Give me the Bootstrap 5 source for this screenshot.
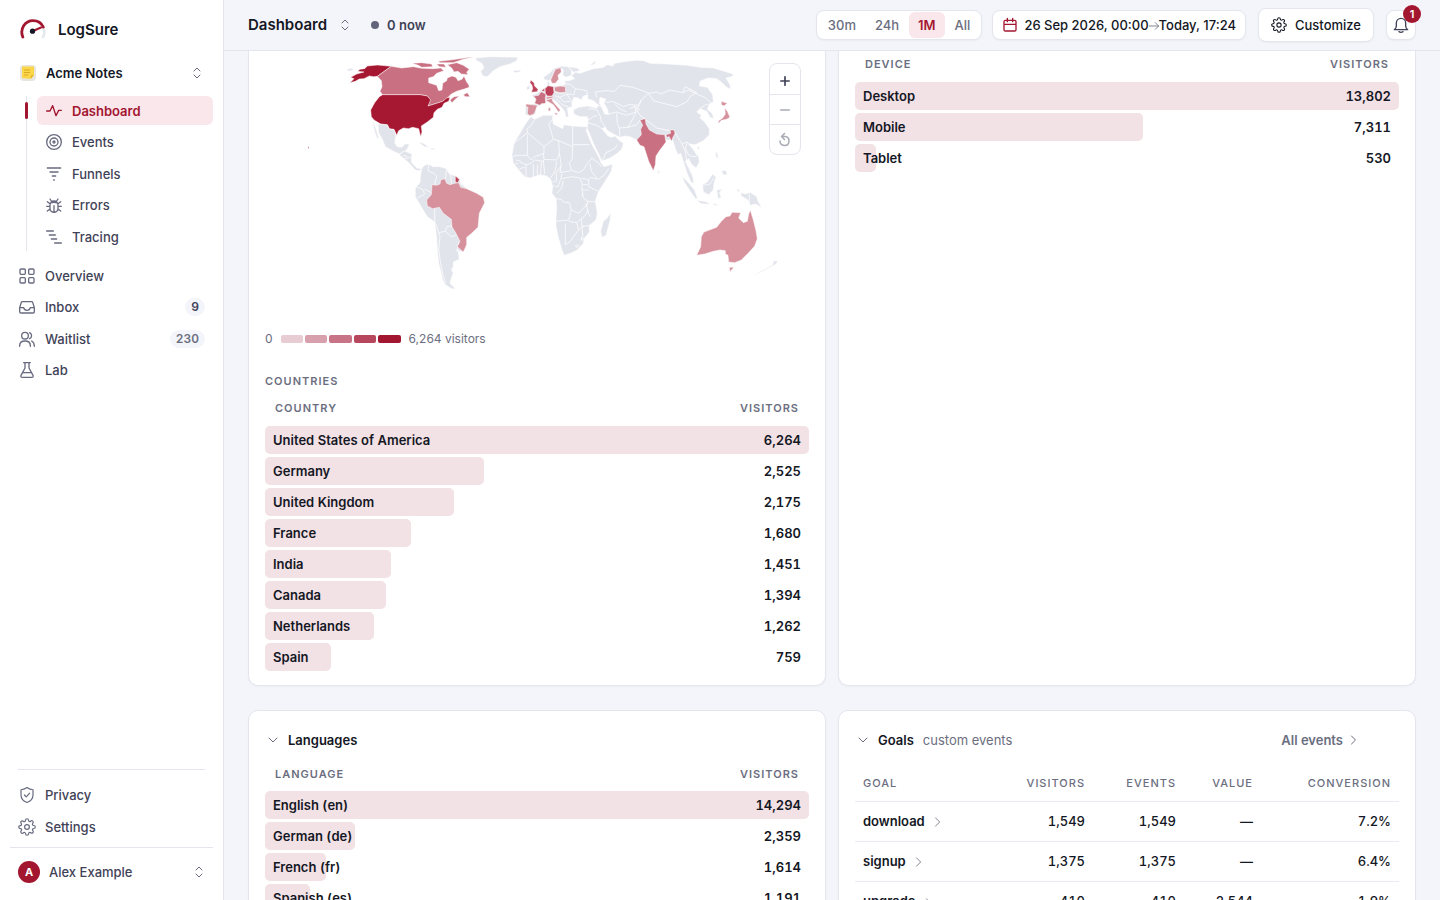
<!DOCTYPE html>
<html lang="en">
<head>
<meta charset="utf-8">
<meta name="viewport" content="width=device-width, initial-scale=1">
<title>LogSure – Dashboard</title>
<link href="https://cdn.jsdelivr.net/npm/bootstrap@5.3.0/dist/css/bootstrap.min.css" rel="stylesheet">
<style>
:root{--accent:#a31630;--ink:#141724;--soft:#3f4257;--dim:#6b6e80;--line:#e4e5ed}
body{font-family:Inter,"Noto Sans",sans-serif;font-size:13px;line-height:20px;color:var(--ink);background:#f4f5fa}
a{text-decoration:none;color:inherit}
button{font:inherit;color:inherit}
svg.ico{width:16px;height:16px;fill:none;stroke:currentColor;stroke-width:2;stroke-linecap:round;stroke-linejoin:round;flex:none;overflow:visible}
svg.thin{stroke-width:1.6}
svg.mini{width:12px;height:12px}
svg.tiny{width:10px;height:10px}
.side{width:224px;background:#fff;border-right:1px solid var(--line);flex:none}
.side svg.ico{color:#686b80}
.brand-row{padding:19px 0 0 20px;gap:12px}
.side-link{height:29px;display:flex;align-items:center;gap:10px;font-weight:500;color:var(--soft);border-radius:6px;width:100%;border:0;background:none}
.project{color:var(--ink);font-weight:600}
.brand-name{font-size:15px;font-weight:600}
.tree{height:155px;margin:10px 10px 0 26px;padding-left:10px;border-left:1px solid var(--line)}
.tree .side-link{padding:0 9px}
.tree .side-link.active{background:#f9e7eb;color:var(--accent);font-weight:600;position:relative}
.tree .side-link.active svg{color:var(--accent)}
.tree .side-link.active::before{content:"";position:absolute;left:-12px;top:6px;width:3px;height:17px;background:var(--accent);border-radius:2px}
.flat{height:124px;margin:10px 18px 0 19px}
.pill{margin-left:auto;font-size:12px;line-height:18px;font-weight:600;background:#f4f5fa;border-radius:9px;padding:0 6px;font-variant-numeric:tabular-nums}
.tail{margin:auto 18px 0;padding:10px 0 6px;display:grid;gap:3px}
.tail .side-link{gap:9px}
.tail svg.ico{width:18px;height:18px}
.account{width:203px;height:53px;gap:9px;padding:0 8px 5px}
.avatar{width:22px;height:22px;border-radius:50%;background:var(--accent);color:#fff;font-size:11px;font-weight:700;line-height:22px;text-align:center}
.topline{border-top:1px solid var(--line)}
.work{min-width:0}
.bar-top{height:51px;border-bottom:1px solid var(--line);padding:0 24px;flex:none}
.live{margin-left:20px;color:var(--soft)}
.tools{gap:12px}
.tools>div{gap:10px}
.box{background:#fff;border:1px solid var(--line);border-radius:8px;box-shadow:0 1px 2px rgba(20,23,36,.04);height:30px;font-weight:500}
.seg{gap:1px;padding:0 2px}
.seg button{border:0;background:none;border-radius:6px;padding:0 9px;height:26px;color:var(--dim);font-weight:500;line-height:26px}
.seg button.on{background:#f9e7eb;color:var(--accent);font-weight:600}
.dates{padding:0 9px;gap:6px}
.count{position:absolute;top:-6px;right:-6px;width:18px;height:18px;border-radius:50%;background:var(--accent);color:#fff;font-size:11px;line-height:18px;font-weight:600;text-align:center}
.panes{display:grid;grid-template-columns:minmax(0,1fr) minmax(0,1fr);column-gap:12px;row-gap:24px;padding:0 24px}
.pane{background:#fff;border:1px solid var(--line);border-radius:10px;padding:0 16px 14px;box-shadow:0 1px 2px rgba(20,23,36,.03)}
.pane.cut{border-top:0;border-top-left-radius:0;border-top-right-radius:0}
.pane-head{padding:19px 0 0 2px;gap:9px}
.pane-head h2{font-size:13px;line-height:20px;font-weight:600;margin:0}
.caps{font-size:11px;line-height:18px;font-weight:600;letter-spacing:1px;text-transform:uppercase;color:var(--dim)}
.cols{margin-top:9px;padding:0 10px}
.pane-head+.cols{margin-top:15px}
.pane-head+.cols+.bars{margin-top:8px}
.bars{display:grid;gap:3px;margin:9px 0 0;padding:0;list-style:none}
.bars li{display:grid;height:28px}
.bars li>*{grid-area:1/1}
.fillbar{background:#f2e1e5;border-radius:5px}
.entry{display:flex;justify-content:space-between;align-items:center;padding:0 8px;font-weight:600;font-variant-numeric:tabular-nums}
.scale{gap:2px;width:120px}
.scale i{flex:1;height:8px;border-radius:2px}
.legend{font-size:12px;line-height:18px;color:var(--dim)}
.world{display:block;width:100%}
.world path{fill:#e2e4ec;stroke:#fff;stroke-width:1.5;stroke-linejoin:round}
.world path.edge{fill:none;stroke-width:2.2}
.world path.sea{fill:#fff}
.world path.v5{fill:#a61731}.world path.v4{fill:#bd4259}.world path.v3{fill:#c97182}.world path.v2{fill:#d6919c}
.zoomer{position:absolute;top:12px;right:8px;width:32px;background:#fff;border:1px solid var(--line);border-radius:8px}
.zoomer button{height:30px;border:0;background:none;display:flex;align-items:center;justify-content:center;color:#a8aab4;padding:0}
.zoomer button:first-child{color:var(--soft);padding-top:3px}
.zoomer button+button{border-top:1px solid var(--line)}
.goals{width:100%;table-layout:fixed;font-variant-numeric:tabular-nums;font-weight:500;margin-top:15px}
.goals th,.goals td{padding:0 8px;text-align:right;white-space:nowrap}
.goals th:first-child,.goals td:first-child{text-align:left}
.goals thead th{height:36px;font-weight:500}
.goals td{height:40px;border-top:1px solid #ebecf2}
.goals td:first-child{font-weight:600}
.w-vis{width:110px}.w-ev{width:91px}.w-val{width:77px}.w-con{width:138px}
</style>
</head>
<body>
<div class="d-flex vh-100 overflow-hidden">
<aside class="side d-flex flex-column">
  <a href="#" class="brand-row d-flex align-items-center">
    <svg width="26" height="22" viewBox="0 0 26 22" fill="none" stroke-linecap="round"><path d="M22.5 8.5Q26 13 23 18" stroke="#e3e9ec" stroke-width="2.6"/><path d="M2.8 18C-.5 10 5 1.600 13 1.600C17.500 1.600 21.500 4 23.300 8" stroke="#a31630" stroke-width="2.800"/><path d="M13 12L21 8.500" stroke="#a31630" stroke-width="2"/><circle cx="12.500" cy="12.200" r="2.600" fill="#141724"/></svg>
    <span class="brand-name">LogSure</span>
  </a>
  <button class="side-link px-3 mt-3 pt-1 text-start" type="button">
    <svg class="ms-1" width="16" height="16" viewBox="0 0 16 16"><rect width="16" height="16" rx="4" fill="#e7e5df"/><path d="M2 1.500H14V10L10.500 14L2 13Z" fill="#fbd748"/><path d="M10.500 14L11 10.500L14 10Z" fill="#e5ae1b"/><path d="M4 5h6M4 7.500h6M4 10h4" stroke="#dba928"/></svg>
    <span class="project">Acme Notes</span>
    <svg class="ico mini ms-auto me-1" viewBox="0 0 24 24"><path d="M6 8l6-6l6 6M6 16l6 6l6-6"/></svg>
  </button>
  <nav class="tree d-flex flex-column justify-content-between">
    <a class="side-link active" href="#"><svg class="ico" viewBox="0 0 24 24"><path d="M1 12h5l4-8l5 15l4-8h4"/></svg>Dashboard</a>
    <a class="side-link" href="#"><svg class="ico" viewBox="0 0 24 24"><circle cx="12" cy="12" r="11"/><circle cx="12" cy="12" r="6"/><circle cx="12" cy="12" r="1.500"/></svg>Events</a>
    <a class="side-link" href="#"><svg class="ico" viewBox="0 0 24 24"><path d="M2 3h20M6 9h12M9.500 15h5M11.500 21h1"/></svg>Funnels</a>
    <a class="side-link" href="#"><svg class="ico" viewBox="0 0 24 24"><path d="M6 12a6 6 0 0 1 12 0v5a6 6 0 0 1-12 0zM7 9q5-2 10 0M12 13v10M8 6L6 3M16 6l2-3M1 14h5M18 14h5M6 10L2 7M18 10l4-3M6 18l-4 3M18 18l4 3"/></svg>Errors</a>
    <a class="side-link" href="#"><svg class="ico" viewBox="0 0 24 24"><path d="M1 3h10M5 9h9M8 15h8M13 21h10"/></svg>Tracing</a>
  </nav>
  <nav class="flat d-flex flex-column justify-content-between">
    <a class="side-link" href="#"><svg class="ico" viewBox="0 0 24 24"><rect x="1.500" y="1.500" width="8" height="8" rx="1.500"/><rect x="14.500" y="1.500" width="8" height="8" rx="1.500"/><rect x="1.500" y="14.500" width="8" height="8" rx="1.500"/><rect x="14.500" y="14.500" width="8" height="8" rx="1.500"/></svg>Overview</a>
    <a class="side-link" href="#"><svg class="ico" viewBox="0 0 24 24"><path d="M23 13h-6q-1 4-5 4t-5-4H1M5 4h14q1 0 1.500 1L23 13v6q0 2-2 2H3q-2 0-2-2v-6L3.500 5Q4 4 5 4z"/></svg>Inbox<span class="pill">9</span></a>
    <a class="side-link" href="#"><svg class="ico" viewBox="0 0 24 24"><circle cx="9" cy="7" r="5"/><path d="M1 23v-1q0-7 8-7t8 7v1M16 2.500a5 5 0 0 1 0 9M19 15q4 2 4 8"/></svg>Waitlist<span class="pill" style="color:var(--dim)">230</span></a>
    <a class="side-link" href="#"><svg class="ico" viewBox="0 0 24 24"><path d="M7 1h10M9 1v8L3 20q-1 3 2 3h14q3 0 2-3L15 9V1M6 16h12"/></svg>Lab</a>
  </nav>
  <nav class="topline tail">
    <a class="side-link" href="#"><svg class="ico thin" viewBox="0 0 24 24"><path d="M12 2q4 3 8 3v7q0 7-8 10q-8-3-8-10V5q4 0 8-3zM8.500 12l2.500 2.500l4.500-5"/></svg>Privacy</a>
    <a class="side-link" href="#"><svg class="ico thin" viewBox="0 0 24 24"><use href="#gear"/></svg>Settings</a>
  </nav>
  <button class="side-link topline rounded-0 mx-auto account" type="button"><span class="avatar">A</span>Alex Example<svg class="ico mini ms-auto" viewBox="0 0 24 24"><path d="M6 8l6-6l6 6M6 16l6 6l6-6"/></svg></button>
</aside>

<div class="work flex-grow-1 d-flex flex-column">
  <header class="bar-top d-flex align-items-center">
    <button type="button" class="border-0 bg-transparent p-0 d-flex align-items-center gap-2"><span class="brand-name">Dashboard</span><svg class="ico mini ms-1" viewBox="0 0 24 24" color="#6b6e80"><path d="M6 8l6-6l6 6M6 16l6 6l6-6"/></svg></button>
    <span class="live d-flex align-items-center gap-2 fw-semibold"><svg width="8" height="8"><circle cx="4" cy="4" r="4" fill="#62657a"/></svg>0 now</span>
    <div class="tools ms-auto d-flex align-items-center">
      <div class="d-flex align-items-center">
        <div class="box seg d-flex align-items-center" role="group" aria-label="Range"><button type="button">30m</button><button type="button">24h</button><button type="button" class="on">1M</button><button type="button">All</button></div>
        <button type="button" class="box dates d-flex align-items-center"><svg class="ico" viewBox="0 0 24 24" color="#a31630"><path d="M5 5h14q2 0 2 2v12q0 2-2 2H5q-2 0-2-2V7q0-2 2-2zM3 11h18M8 2v5M16 2v5"/></svg><span>26 Sep 2026, 00:00<svg class="ico tiny" viewBox="0 0 24 24" color="#6b6e80"><path d="M1 12h22M15 4l8 8l-8 8"/></svg>Today, 17:24</span></button>
      </div>
      <button type="button" class="box d-flex align-items-center gap-2" style="height:34px;padding:0 12px"><svg class="ico thin" viewBox="0 0 24 24"><g id="gear"><circle cx="12" cy="12" r="3.200"/><path d="M19.400 15a1.650 1.650 0 0 0 .33 1.820l.06.06a2 2 0 0 1 0 2.830 2 2 0 0 1-2.830 0l-.06-.06a1.650 1.650 0 0 0-1.820-.33 1.650 1.650 0 0 0-1 1.510V21a2 2 0 0 1-2 2 2 2 0 0 1-2-2v-.09A1.650 1.650 0 0 0 9 19.400a1.650 1.650 0 0 0-1.820.33l-.06.06a2 2 0 0 1-2.830 0 2 2 0 0 1 0-2.830l.06-.06a1.650 1.650 0 0 0 .33-1.820 1.650 1.650 0 0 0-1.510-1H3a2 2 0 0 1-2-2 2 2 0 0 1 2-2h.09A1.650 1.650 0 0 0 4.600 9a1.650 1.650 0 0 0-.33-1.820l-.06-.06a2 2 0 0 1 0-2.830 2 2 0 0 1 2.830 0l.06.06a1.650 1.650 0 0 0 1.820.33H9a1.650 1.650 0 0 0 1-1.510V3a2 2 0 0 1 2-2 2 2 0 0 1 2 2v.09a1.650 1.650 0 0 0 1 1.510 1.650 1.650 0 0 0 1.820-.33l.06-.06a2 2 0 0 1 2.830 0 2 2 0 0 1 0 2.830l-.06.06a1.650 1.650 0 0 0-.33 1.820V9a1.650 1.650 0 0 0 1.510 1H21a2 2 0 0 1 2 2 2 2 0 0 1-2 2h-.09a1.650 1.650 0 0 0-1.510 1z"/></g></svg>Customize</button>
      <button type="button" class="box position-relative p-0 d-flex align-items-center justify-content-center" style="width:30px" aria-label="Notifications"><svg class="ico" viewBox="0 0 24 24" color="#3f4257"><path d="M2 19q3-2 3-6V9a7 7 0 0 1 14 0v4q0 4 3 6zM9 22q3 2 6 0"/></svg><span class="count">1</span></button>
    </div>
  </header>

  <main class="panes">
    <section class="pane cut">
      <div class="position-relative">
        <svg class="world" viewBox="0 0 544 279" role="img" aria-label="Visitors by country">
          <g transform="translate(25 -1) scale(.33333)">
            <path d="M556 24L600 20L684 22L680 32L660 42L630 50L610 62L592 80L578 78L572 64L582 54L576 40L560 32Z"/>
            <path d="M668 62L694 60L688 66L674 68ZM170 58L186 54L190 60L176 64ZM170 100L182 96L184 99Z"/>
            <path class="v5" d="M182 82L200 72L222 66L203 64L210 58L224 56L232 48L262 45L304 49L262 79L250 80L238 78L222 86L208 87L196 94L180 98L192 86Z"/>
            <path class="v3" d="M304 49L335 54L370 50L395 55L430 56L452 54L462 62L440 70L430 80L416 84L416 98L440 106L446 122L456 120L458 100L470 92L472 84L486 78L498 82L504 92L516 88L522 78L530 96L536 104L538 112L520 118L500 124L484 132L470 146L458 154L440 160L414 168L420 150L412 138L390 134L278 134L270 124L276 110L274 92L262 79Z"/>
            <path class="v3" d="M366 40L395 38L425 42L428 50L395 52L385 46ZM445 34L480 30L540 22L552 21L520 28L490 38L450 38ZM472 44L500 38L520 46L538 58L530 66L534 74L514 72L504 64L492 66L485 54ZM440 42L462 42L468 52L448 50ZM520 134L532 128L540 140L526 140ZM480 150L492 140L508 138L496 148L486 158Z"/>
            <path class="v5" d="M278 134L390 134L412 138L422 150L414 168L440 160L458 154L470 144L480 142L476 154L462 160L456 172L442 178L432 188L430 202L412 216L394 228L396 246L392 260L386 236L368 232L355 236L340 234L326 242L320 256L312 238L298 236L292 224L272 222L252 210L244 200L242 180L254 158L268 140Z"/>
            <path class="v5" d="M54 290h3v5h-3z"/>
            <path d="M264 222L292 225L298 237L312 240L318 256L314 278L322 290L336 292L344 282L358 282L352 296L346 304L338 306L328 312L308 302L286 290L278 270L266 248ZM250 216L256 232L266 262L262 266L254 244L248 220Z"/>
            <path d="M338 306L346 304L366 312L364 336L380 354L396 356L388 362L376 360L358 340L342 326L328 314ZM384 276L400 280L418 292L404 290ZM420 294L436 296L434 300L422 298Z"/>
            <path d="M396 354L404 346L416 342L428 350L450 350L470 356L478 372L498 378L510 386L512 402L530 414L540 556L530 566L528 590L520 606L508 604L502 598L506 612L508 628L490 636L490 650L484 660L490 668L484 684L480 700L496 716L486 716L466 704L458 690L454 670L446 640L442 600L440 560L434 516L412 500L390 464L376 440L376 414L390 398L392 372Z"/>
            <path class="edge" d="M416 342L414 362L432 370L440 378L434 404M470 358L466 386M482 374L484 400M378 410L398 418L404 432L382 444M404 418L424 428M434 474L434 516L440 528L446 548L450 560L446 600L452 640L460 680L468 700M446 548L466 544L470 530L488 528M466 544L484 560L498 556M506 576L500 604M340 316L352 320M344 326L364 322"/>
            <path class="v2" d="M426 404L440 406L450 402L452 390L464 386L470 400L480 404L494 400L506 398L512 412L530 416L560 430L580 442L584 458L568 490L564 532L545 550L530 562L530 584L520 606L502 590L510 574L498 550L486 530L484 508L460 490L448 472L428 476L412 468L410 450L424 434Z"/>
            <path class="v4" d="M496 378L508 388L504 398L496 396Z"/>
          </g>
          <g transform="translate(235 -1) scale(.33333)">
            <path d="M92 200L104 208L130 196L158 196L158 208L160 222L188 236L192 224L218 228L250 230L264 230L258 240L276 284L296 320L304 340L312 350L338 342L334 364L314 396L296 424L290 440L286 454L292 490L288 510L268 526L268 546L252 566L250 580L232 600L212 610L192 616L186 600L176 566L168 530L168 500L170 476L168 446L156 430L158 408L152 388L140 378L120 374L90 384L74 380L56 360L40 340L36 316L42 280L60 250L76 222Z"/>
            <path d="M332 488L330 512L318 556L306 562L302 544L310 514L322 504Z"/>
            <path class="edge" d="M104 208L96 224L82 236L82 248L42 280M82 248L132 290L160 268L152 240L146 222L158 208M82 254L82 316L48 316L38 320M82 316L94 330L104 320L132 310L132 290M160 268L176 272L178 310L170 330L132 328L130 310M176 272L218 290L218 228M218 284L268 284M218 290L216 330L208 338L214 360L236 368L250 360L262 340L276 324L296 340L304 350M178 310L184 346L180 368L212 362M130 330L134 372M100 342L100 380M112 344L112 376M124 336L122 374M78 344L78 380M60 336L78 344L94 340L104 330L130 334M170 334L166 362L152 384M184 346L168 370L170 392L158 396M158 408L174 410L182 388L186 372M186 386L214 380L240 384L246 398L246 420L250 444L264 454M168 446L184 448L190 456L208 458L214 480L236 490L262 462L264 454L288 456M170 430L184 416L190 392M214 480L206 510L168 514M206 514L230 518L244 506L258 494L264 478M196 520L196 584L210 576L220 560L236 540L246 530M230 518L236 540M246 530L268 526M246 384L266 390L266 410L286 420L296 424M270 340L274 364L294 388L312 376L326 356M266 390L272 382L292 388M248 404L262 404M246 420L266 420M250 430L244 438M244 506L246 530L248 556L242 572M48 330L62 334M58 356L74 352M40 344L54 340M258 460L266 490L272 500"/>
            <path class="edge" d="M226 588l6-5l5 4l-5 6zM244 566l4-4l3 5l-4 4z"/>
            <path d="M130 82L148 70L164 54L184 48L204 50L214 62L214 76L198 82L188 76L190 60L180 54L164 60L158 76L152 90L144 92L132 88Z"/>
            <path d="M204 50L232 54L240 62L222 66L240 70L262 62L280 56L310 52L322 44L338 48L344 40L380 34L410 31L430 32L450 40L500 42L560 46L600 52L640 54L680 66L702 74L694 80L678 84L690 104L692 118L678 110L664 96L650 86L624 84L600 94L598 108L622 112L638 134L640 156L628 162L622 178L636 190L642 206L630 202L620 184L610 180L600 176L590 186L604 196L600 204L612 214L628 236L628 254L610 272L586 284L566 282L578 296L596 320L598 336L588 354L574 342L566 326L556 334L564 350L578 378L582 400L572 396L560 366L550 334L542 310L534 314L526 296L518 270L500 270L484 256L440 284L420 286L410 270L390 260L376 258L360 262L340 252L326 244L314 232L306 236L324 258L334 262L346 258L352 266L370 280L366 296L352 310L330 324L306 334L298 316L284 288L268 250L262 236L264 210L262 200L240 200L222 192L220 180L236 172L262 168L290 174L296 166L280 152L262 146L264 136L250 138L244 150L234 144L222 142L216 156L216 170L202 174L204 188L206 200L198 202L194 184L184 172L170 156L160 148L150 150L140 156L120 166L108 172L108 190L96 198L76 194L76 164L104 162L106 146L94 136L108 132L120 124L136 112L142 106L142 94L148 96L150 108L172 108L196 104L194 92L206 92L224 86L214 76L224 70Z"/>
            <path class="sea" d="M300 142L318 148L312 160L322 176L326 194L314 192L306 174L298 160Z"/>
            <path class="edge" d="M196 100L212 104L226 116L260 122L262 136L250 140M226 116L222 134L200 132L180 142L166 138M166 126L180 130L196 128M180 142L190 156L214 154M200 132L212 150M170 146L186 164L204 170M290 142L286 126L318 122L344 124L360 106L400 112L432 124L446 130L424 150L416 166L388 164L370 170L340 154L318 158M446 130L470 126L482 132L510 120L548 128L566 120L590 132L614 142L638 162M446 130L460 152L490 160L530 170L560 156L570 140L590 128L556 110L548 128M424 150L410 180L420 196L444 214L470 234L508 242M326 192L350 186L380 196L408 186L404 166M344 160L356 174L380 186M350 190L352 220L358 234L360 262M358 234L384 232L402 200L408 186M296 166L314 172M264 176L290 178L300 196L304 214L318 234M264 210L280 200L292 196M264 218L290 226L306 236M306 334L318 308L344 296L352 284M518 264L524 246L534 262L546 282L556 304L560 330M546 282L560 276L580 290L590 316M562 276L556 296L568 318L590 320M384 232L410 224L420 210M388 176L404 170L420 180M600 176L614 166L624 162"/>
            <path class="v3" d="M420 210L436 206L438 222L448 240L470 252L494 254L498 276L480 300L468 318L466 344L460 362L446 334L432 290L420 286L410 270L424 254L422 238L428 226Z"/>
            <path class="v3" d="M498 254L512 250L510 240L522 240L525 250L518 264L514 274L508 260L500 262Z"/>
            <path class="v2" d="M152 90L158 76L166 58L182 53L184 66L174 76L176 88L166 100L156 100Z"/>
            <path class="v4" d="M92 90L102 98L104 108L114 118L112 125L94 127L98 116L96 106L90 98Z"/>
            <path d="M80 112L88 106L90 116L80 120ZM472 360L480 366L476 373ZM272 44L284 34L288 38L276 46ZM594 288L598 290L596 300L592 296Z"/>
            <path class="v3" d="M101 138L116 136L123 125L138 132L136 144L137 160L124 161L120 166L104 160L108 148Z"/>
            <path class="v2" d="M78 162L112 166L108 178L102 192L88 197L82 190L84 172L78 170Z"/>
            <path class="v4" d="M135 116L144 107L160 110L162 128L156 138L142 138L136 130ZM124 123L134 114L134 124Z"/>
            <path class="v2" d="M163 112L180 108L196 110L197 127L180 128L164 124ZM137 150L157 145L158 154L172 170L181 180L176 187L160 164L146 156ZM145 173h6v10h-6zM162 188L173 190L170 196ZM139 141L160 139L158 144L140 148Z"/>
            <path class="v2" d="M664 154L682 160L672 168L664 164ZM674 174L682 184L690 202L680 208L664 211L654 222L656 212L668 204L676 192Z"/>
            <path d="M546 380L560 392L584 420L592 444L588 448L572 426L554 398ZM590 450L620 456L630 463L604 461ZM608 404L622 396L638 372L648 382L642 400L640 420L626 434L610 426ZM650 420L666 418L658 428L664 442L654 446L652 432ZM646 304L652 310L656 326L648 320ZM676 360L682 372L672 376L664 364ZM640 460L660 466L642 466ZM708 416L720 420L716 426ZM722 428L738 432L750 426L770 440L774 454L786 474L768 462L750 466L744 450L724 438ZM758 678L800 654L818 644L822 632L834 634L828 642L810 652L780 668Z"/>
            <path class="edge" d="M748 426V464M610 406L630 402L642 384"/>
            <path class="v2" d="M590 616L602 590L604 560L612 546L650 532L664 514L678 500L690 498L696 487L722 488L716 504L730 518L742 514L746 492L751 480L760 510L768 542L772 566L764 588L746 608L724 630L704 638L686 636L684 616L676 612L676 602L660 600L640 604L614 612ZM688 652L702 652L690 665Z"/>
          </g>
        </svg>
        <div class="zoomer d-grid">
          <button type="button" aria-label="Zoom in"><svg class="ico tiny" style="stroke-width:4" viewBox="0 0 24 24"><path d="M2 12h20M12 2v20"/></svg></button>
          <button type="button" aria-label="Zoom out"><svg class="ico tiny" style="stroke-width:4" viewBox="0 0 24 24"><path d="M2 12h20"/></svg></button>
          <button type="button" aria-label="Reset"><svg class="ico mini" style="stroke-width:3" viewBox="0 0 24 24"><path d="M6 5H13a9 9 0 1 1-11 9M11 -1L5 5l6 6"/></svg></button>
        </div>
      </div>
      <div class="legend d-flex align-items-center gap-2"><span>0</span><span class="scale d-flex"><i style="background:#e8ccd3"></i><i style="background:#d8a0ad"></i><i style="background:#c87486"></i><i style="background:#b7475d"></i><i style="background:#a31630"></i></span><span>6,264 visitors</span></div>
      <h2 class="caps mt-4 mb-0">Countries</h2>
      <div class="caps cols d-flex justify-content-between"><span>Country</span><span>Visitors</span></div>
      <ul class="bars">
        <li><span class="fillbar" style="width:100%"></span><span class="entry"><span>United States of America</span><span>6,264</span></span></li>
        <li><span class="fillbar" style="width:40.3%"></span><span class="entry"><span>Germany</span><span>2,525</span></span></li>
        <li><span class="fillbar" style="width:34.7%"></span><span class="entry"><span>United Kingdom</span><span>2,175</span></span></li>
        <li><span class="fillbar" style="width:26.8%"></span><span class="entry"><span>France</span><span>1,680</span></span></li>
        <li><span class="fillbar" style="width:23.2%"></span><span class="entry"><span>India</span><span>1,451</span></span></li>
        <li><span class="fillbar" style="width:22.2%"></span><span class="entry"><span>Canada</span><span>1,394</span></span></li>
        <li><span class="fillbar" style="width:20.1%"></span><span class="entry"><span>Netherlands</span><span>1,262</span></span></li>
        <li><span class="fillbar" style="width:12.1%"></span><span class="entry"><span>Spain</span><span>759</span></span></li>
      </ul>
    </section>

    <section class="pane cut pt-1">
      <div class="caps d-flex justify-content-between" style="padding:0 10px"><span>Device</span><span>Visitors</span></div>
      <ul class="bars">
        <li><span class="fillbar" style="width:100%"></span><span class="entry"><span>Desktop</span><span>13,802</span></span></li>
        <li><span class="fillbar" style="width:53%"></span><span class="entry"><span>Mobile</span><span>7,311</span></span></li>
        <li><span class="fillbar" style="width:3.8%"></span><span class="entry"><span>Tablet</span><span>530</span></span></li>
      </ul>
    </section>

    <section class="pane">
      <div class="pane-head d-flex align-items-center"><button type="button" class="border-0 bg-transparent p-0 d-flex" aria-label="Collapse Languages"><svg class="ico mini" viewBox="0 0 24 24" color="#6b6e80"><path d="M4 8l8 8l8-8"/></svg></button><h2>Languages</h2></div>
      <div class="caps cols d-flex justify-content-between"><span>Language</span><span>Visitors</span></div>
      <ul class="bars">
        <li><span class="fillbar" style="width:100%"></span><span class="entry"><span>English (en)</span><span>14,294</span></span></li>
        <li><span class="fillbar" style="width:16.5%"></span><span class="entry"><span>German (de)</span><span>2,359</span></span></li>
        <li><span class="fillbar" style="width:11.3%"></span><span class="entry"><span>French (fr)</span><span>1,614</span></span></li>
        <li><span class="fillbar" style="width:8.3%"></span><span class="entry"><span>Spanish (es)</span><span>1,191</span></span></li>
      </ul>
    </section>

    <section class="pane">
      <div class="pane-head d-flex align-items-center"><button type="button" class="border-0 bg-transparent p-0 d-flex" aria-label="Collapse Goals"><svg class="ico mini" viewBox="0 0 24 24" color="#6b6e80"><path d="M4 8l8 8l8-8"/></svg></button><h2>Goals</h2><span style="color:var(--dim)">custom events</span>
        <a href="#" class="ms-auto me-4 pe-3 d-flex align-items-center gap-1 fw-semibold" style="color:var(--dim)">All events<svg class="ico mini" viewBox="0 0 24 24"><path d="M9 4l8 8l-8 8"/></svg></a></div>
      <table class="goals">
        <colgroup><col><col class="w-vis"><col class="w-ev"><col class="w-val"><col class="w-con"></colgroup>
        <thead><tr class="caps"><th>Goal</th><th>Visitors</th><th>Events</th><th>Value</th><th>Conversion</th></tr></thead>
        <tbody>
          <tr><td><a href="#">download<svg class="ico tiny ms-2" viewBox="0 0 24 24" color="#6b6e80"><path d="M6 2l10 10l-10 10"/></svg></a></td><td>1,549</td><td>1,549</td><td>—</td><td>7.2%</td></tr>
          <tr><td><a href="#">signup<svg class="ico tiny ms-2" viewBox="0 0 24 24" color="#6b6e80"><path d="M6 2l10 10l-10 10"/></svg></a></td><td>1,375</td><td>1,375</td><td>—</td><td>6.4%</td></tr>
          <tr><td><a href="#">upgrade<svg class="ico tiny ms-2" viewBox="0 0 24 24" color="#6b6e80"><path d="M6 2l10 10l-10 10"/></svg></a></td><td>410</td><td>410</td><td>2,544</td><td>1.9%</td></tr>
        </tbody>
      </table>
    </section>
  </main>
</div>
</div>
<script src="https://cdn.jsdelivr.net/npm/bootstrap@5.3.0/dist/js/bootstrap.bundle.min.js"></script>
</body>
</html>
